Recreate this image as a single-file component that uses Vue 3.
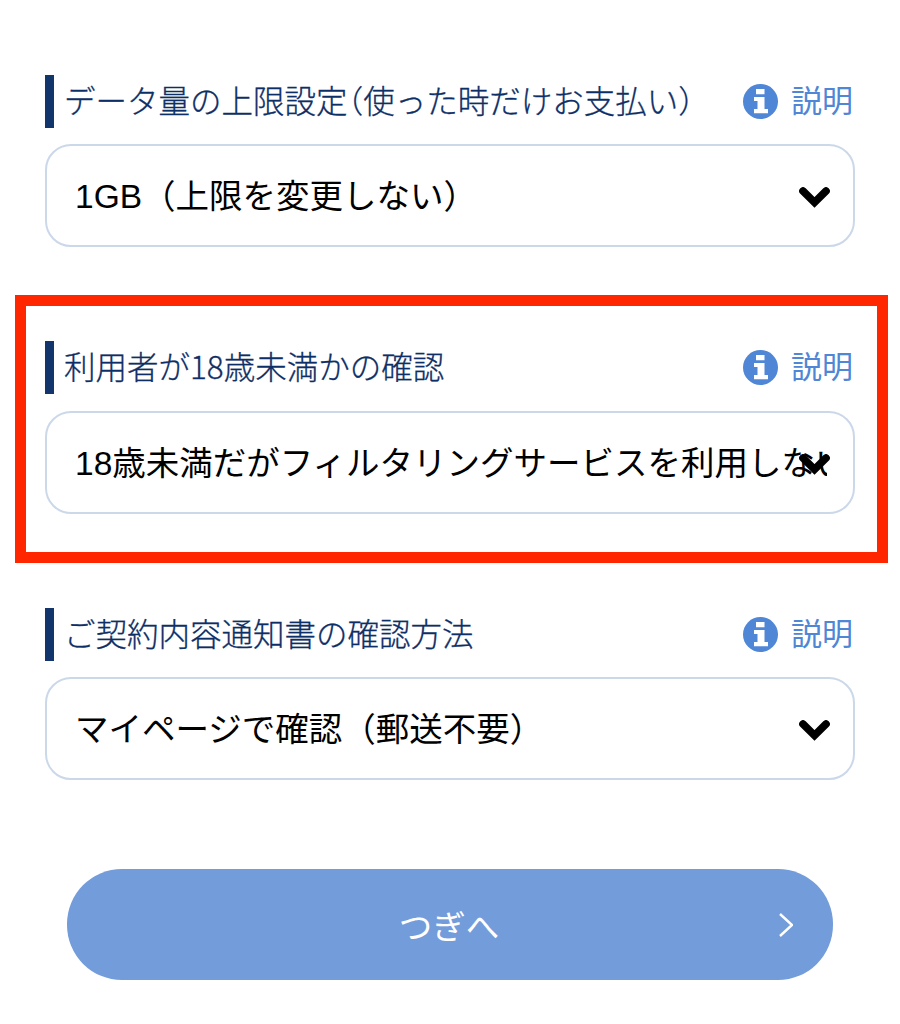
<template>
  <div class="page">
    <section v-for="item in items" :key="item.label" class="field" :class="{ flagged: item.flagged }">
      <div class="field-head">
        <span class="field-label">{{ item.label }}</span>
        <a class="help">
          <svg class="help-icon" viewBox="0 0 35 35">
            <circle cx="17.5" cy="17.5" r="17.5" fill="currentColor" />
            <path fill="#fff" d="M13 5h8.5v5.2H13zM11 13h10.5v12H25v4.2H11V25h3.5v-8H11z" />
          </svg>
          <span class="help-text">説明</span>
        </a>
      </div>
      <div class="select">
        <span class="select-value">{{ item.value }}</span>
        <svg class="select-arrow" viewBox="0 0 31 22">
          <path d="M4 4l11.5 11.5L27 4" fill="none" stroke="currentColor" stroke-width="7.6" stroke-linecap="round" />
        </svg>
      </div>
    </section>

    <button class="next" type="button">
      つぎへ
      <svg class="next-arrow" viewBox="0 0 14 24">
        <path d="M1 1l12 11L1 23" fill="none" stroke="currentColor" stroke-width="2.4" />
      </svg>
    </button>
  </div>
</template>

<script setup>
const items = [
  { label: 'データ量の上限設定（使った時だけお支払い）', value: '1GB（上限を変更しない）' },
  { label: '利用者が18歳未満かの確認', value: '18歳未満だがフィルタリングサービスを利用しない', flagged: true },
  { label: 'ご契約内容通知書の確認方法', value: 'マイページで確認（郵送不要）' }
]
</script>

<style>
html,
body {
  background: #fff;
}
</style>

<style scoped>
.page {
  box-sizing: border-box;
  width: 900px;
  height: 1024px;
  padding: 75px 45px 0;
  overflow: hidden;
  font-family: "Liberation Sans", "Noto Sans CJK JP", sans-serif;
}

.field + .field {
  margin-top: 48px;
}

.field.flagged {
  margin: 48px -33px 45px -30px;
  padding: 35px 22px 38px 19px;
  border: 11px solid #ff2600;
}

.field.flagged .field-head {
  margin-bottom: 17px;
}

.field.flagged + .field {
  margin-top: 0;
}

.field-head {
  display: flex;
  align-items: center;
  justify-content: space-between;
  height: 53px;
  margin-bottom: 16px;
  padding-left: 10px;
  border-left: 9px solid #12356b;
}

.field-label {
  margin-top: -5px;
  font-family: "Noto Sans CJK JP", sans-serif;
  font-size: 31.5px;
  font-weight: 300;
  font-feature-settings: "halt";
  -webkit-text-stroke: 0.3px #0e2f66;
  color: #0e2f66;
  white-space: nowrap;
}

.help {
  display: flex;
  align-items: center;
  gap: 13px;
  margin-right: 2px;
  font-size: 31px;
  color: #4f86d6;
}

.help-text {
  margin-top: -6px;
}

.help-icon {
  width: 35px;
  height: 35px;
}

.select {
  position: relative;
  box-sizing: border-box;
  display: flex;
  align-items: center;
  height: 103px;
  padding: 0 26px 0 28px;
  border: 2px solid #cbd8ea;
  border-radius: 26px;
  background: #fff;
}

.select-value {
  overflow: hidden;
  margin-top: -4px;
  font-size: 33.5px;
  color: #000;
  white-space: nowrap;
}

.select-arrow {
  position: absolute;
  top: 41px;
  right: 23px;
  width: 31px;
  height: 22px;
  color: #000;
}

.next {
  position: relative;
  display: block;
  width: 766px;
  height: 111px;
  margin: 89px 0 0 22px;
  padding: 0 2px 0 0;
  border: 0;
  border-radius: 55px;
  background: #739cdb;
  font-family: inherit;
  font-size: 33.5px;
  color: #fff;
}

.next-arrow {
  position: absolute;
  top: 44px;
  right: 40px;
  width: 14px;
  height: 24px;
}
</style>
